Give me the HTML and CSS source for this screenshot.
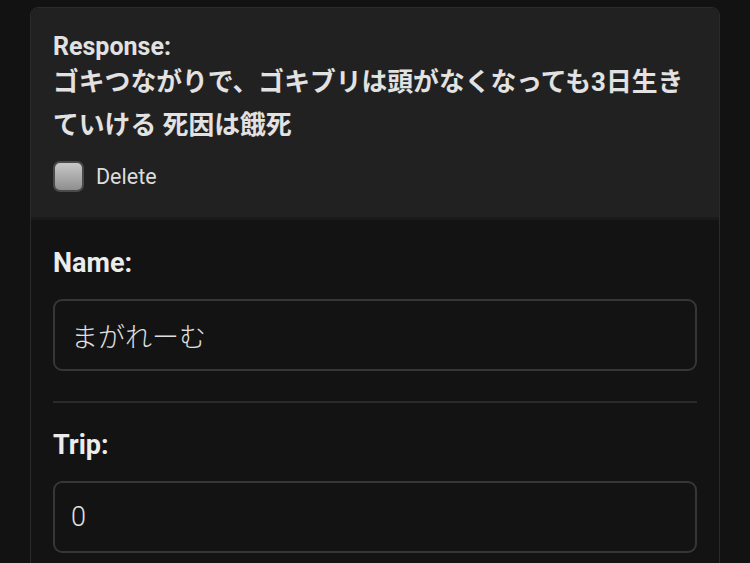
FILE: index.html
```html
<!DOCTYPE html>
<html lang="ja">
<head>
<meta charset="utf-8">
<title>Response</title>
<link rel="stylesheet" href="styles.css">
</head>
<body>
<div class="card">
  <div class="card-header">
    <div class="resp-label">Response:</div>
    <div class="resp-text">ゴキつながりで、ゴキブリは頭がなくなっても3日生きていける 死因は餓死</div>
    <label class="check">
      <span class="check-box"></span>
      <span class="check-label">Delete</span>
    </label>
  </div>
  <div class="card-body">
    <div class="field">
      <div class="field-label">Name:</div>
      <div class="field-input">まがれーむ</div>
    </div>
    <div class="field">
      <div class="field-label">Trip:</div>
      <div class="field-input">0</div>
    </div>
  </div>
</div>
</body>
</html>
```
FILE: styles.css
```css
html, body {
  margin: 0;
  padding: 0;
  background: #121212;
  height: 100%;
  overflow: hidden;
}
body {
  padding: 7px 0 0 30px;
  font-family: Roboto, "Noto Sans CJK JP", sans-serif;
  color: #e4e4e4;
}
.card {
  width: 688px;
  border: 1px solid #2b2b2b;
  border-radius: 8px;
  overflow: hidden;
  background: #131313;
}
.card-header {
  background: #212121;
  padding: 24px 22px 25px;
  border-bottom: 3px solid #1a1a1a;
}
.resp-label {
  font-size: 25px;
  line-height: 29px;
  font-weight: 700;
  color: #e2e2e2;
}
.resp-text {
  font-size: 25.8px;
  line-height: 43px;
  font-weight: 700;
  color: #e2e2e2;
}
.check {
  display: flex;
  align-items: center;
  gap: 12px;
  margin-top: 14px;
}
.check-box {
  width: 27px;
  height: 27px;
  border: 2px solid #4a4a4a;
  border-radius: 7px;
  background: linear-gradient(#c8c8c8, #8e8e8e);
}
.check-label {
  font-size: 21.5px;
  color: #dcdcdc;
}
.card-body {
  padding: 0 22px;
}
.field {
  padding: 26px 0 30px;
  border-bottom: 2px solid #2a2a2a;
}
.field:first-child {
  padding-top: 27px;
}
.field-label {
  font-size: 27px;
  line-height: 32px;
  font-weight: 700;
  color: #ececec;
}
.field-input {
  margin-top: 20px;
  height: 68px;
  border: 2px solid #363636;
  border-radius: 9px;
  padding: 0 16px;
  display: flex;
  align-items: center;
  font-size: 27px;
  font-weight: 300;
  color: #e0e0e0;
  background: #131313;
}
```
